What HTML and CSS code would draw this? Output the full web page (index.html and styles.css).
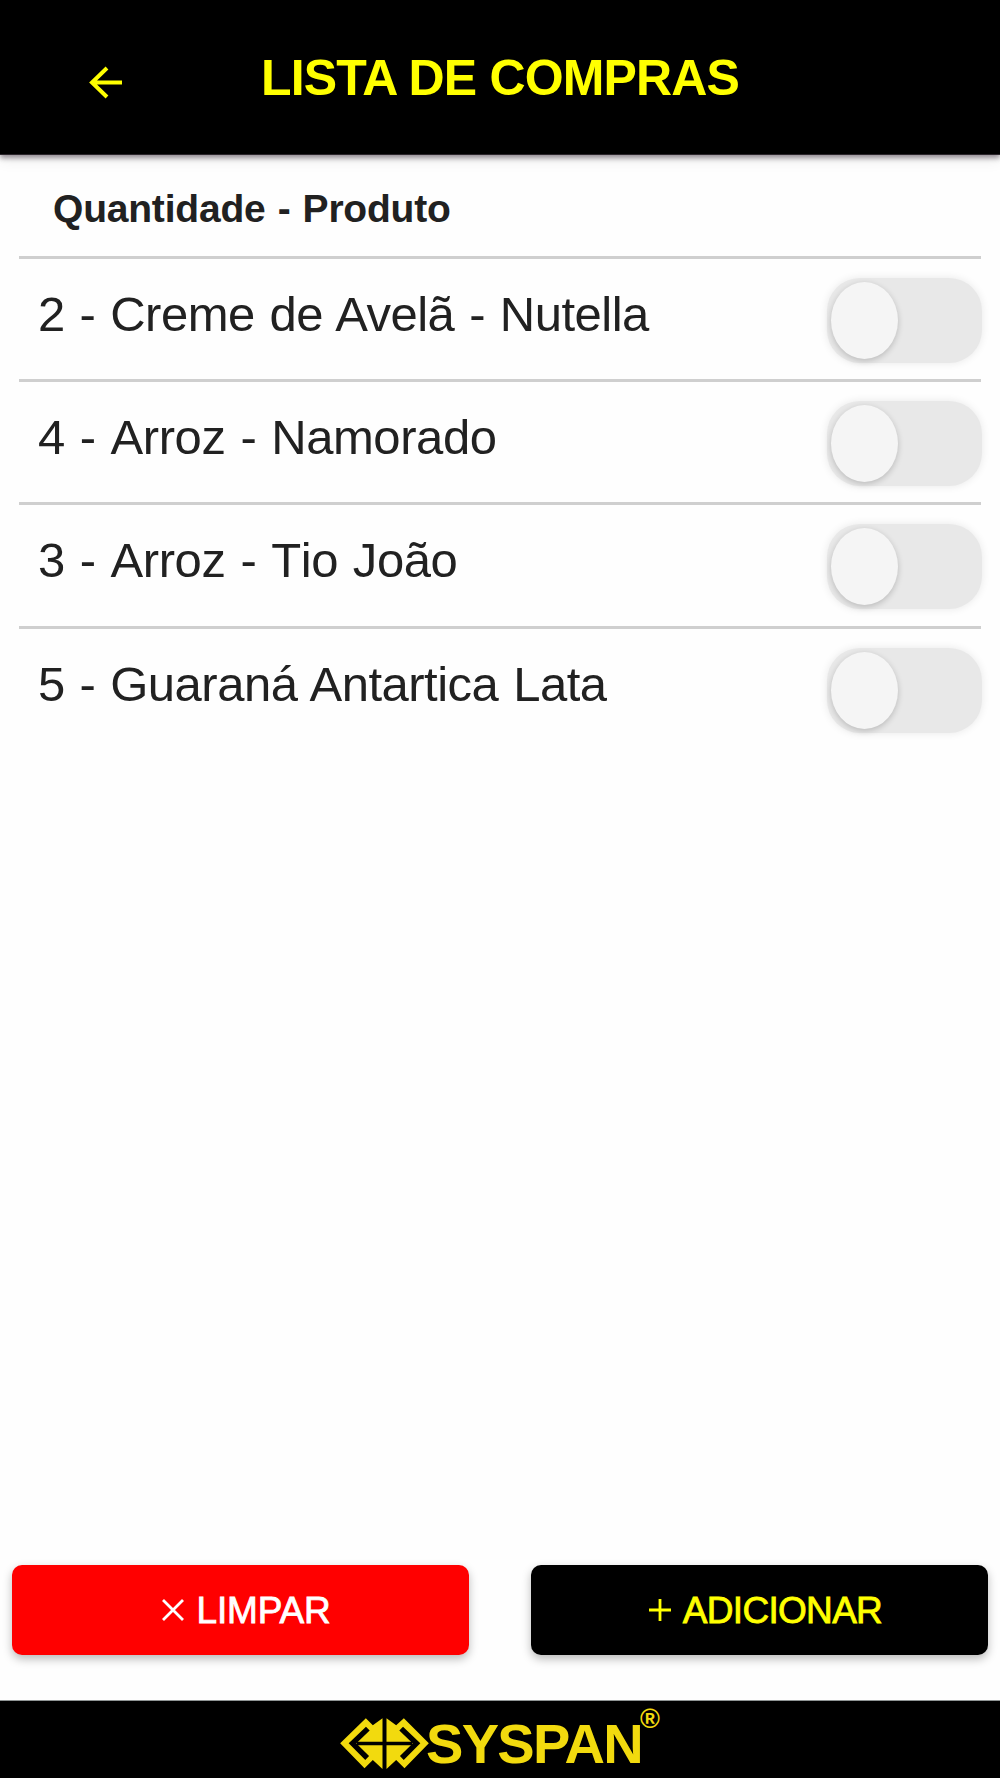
FILE: index.html
```html
<!DOCTYPE html>
<html lang="pt-BR">
<head>
<meta charset="utf-8">
<title>Lista de Compras</title>
<link rel="stylesheet" href="styles.css">
</head>
<body>
<div class="app">
  <header class="toolbar">
    <svg class="back" viewBox="0 0 34 34" aria-label="Voltar"><path d="M18 2 3 16.5 18 31M3 16.5H33" fill="none" stroke="currentColor" stroke-width="4"/></svg>
    <h1 class="title">LISTA DE COMPRAS</h1>
  </header>
  <main class="content">
    <h2 class="list-head">Quantidade - Produto</h2>
    <ul class="list">
      <li class="item"><span class="name name-long">2 - Creme de Avelã - Nutella</span><span class="toggle"><span class="knob"></span></span></li>
      <li class="item"><span class="name">4 - Arroz - Namorado</span><span class="toggle"><span class="knob"></span></span></li>
      <li class="item"><span class="name">3 - Arroz - Tio João</span><span class="toggle"><span class="knob"></span></span></li>
      <li class="item"><span class="name name-long">5 - Guaraná Antartica Lata</span><span class="toggle"><span class="knob"></span></span></li>
    </ul>
  </main>
  <div class="actions">
    <button class="btn btn-clear"><svg class="icon" viewBox="0 0 22 22"><path d="M1 1 21 21M21 1 1 21" stroke="currentColor" stroke-width="2.8"/></svg><span class="label">LIMPAR</span></button>
    <button class="btn btn-add"><svg class="icon" viewBox="0 0 22 22"><path d="M11 0V22M0 11H22" stroke="currentColor" stroke-width="2.8"/></svg><span class="label">ADICIONAR</span></button>
  </div>
  <footer class="footer">
    <svg class="mark" viewBox="60 84 266 153">
      <path fill="#f2da0e" d="M60 160 137 85 158 106 187 85V237L158 210 133 235ZM326 160 251 85 228 106 199 85V237L228 210 253 235Z"/>
      <path fill="none" stroke="#000" stroke-width="16" d="M143 116 97 160 141 204M243 116 289 160 245 204"/>
      <path stroke="#000" stroke-width="11" d="M110 160.500H276"/>
    </svg>
    <span class="brand">SYSPAN</span>
    <span class="reg">®</span>
  </footer>
</div>
</body>
</html>
```

FILE: styles.css
```css
* { box-sizing: border-box; }
body {
  margin: 0;
  background: #fefefe;
  color: #212121;
  font-family: "Liberation Sans", Arial, sans-serif;
}
.app { height: 1778px; display: flex; flex-direction: column; overflow: hidden; }
.toolbar {
  height: 155px;
  flex: none;
  display: grid;
  grid-template-columns: 180px 1fr 180px;
  background: #000;
  color: #ff0;
  border-bottom: 1px solid #2b252b;
  box-shadow: 0 3px 5px rgba(20, 0, 20, .42), 0 5px 14px rgba(0, 0, 0, .08);
}
.back { width: 34px; height: 34px; margin: 66px 0 0 89px; }
.title {
  margin: 49px 0 0;
  font-size: 50px;
  line-height: 58px;
  letter-spacing: -.85px;
  text-align: center;
  white-space: nowrap;
}
.content { flex: 1; padding: 0 19px; }
.list-head { margin: 0; padding: 31px 34px 0; height: 101px; font-size: 39px; line-height: 46px; letter-spacing: -.2px; word-spacing: 1.5px; }
.list { margin: 0; padding: 0; list-style: none; }
.item {
  height: 123.2px;
  border-top: 3px solid #cfcfcf;
  display: flex;
  justify-content: space-between;
  padding: 0 0 0 19px;
}
.name {
  margin-top: 27px;
  font-size: 49px;
  line-height: 56px;
  letter-spacing: -.42px;
  word-spacing: 1.7px;
  font-kerning: none;
  white-space: nowrap;
}
.name-long { font-kerning: normal; letter-spacing: -.5px; }
.toggle {
  width: 155px;
  height: 85px;
  margin: 19px -1px 0 0;
  padding: 4px;
  border-radius: 33px;
  background: #e8e8e8;
  box-shadow: 0 0 9px rgba(0, 0, 0, .09);
}
.knob {
  display: block;
  width: 67px;
  height: 77px;
  border-radius: 50%;
  background: #f5f5f5;
  box-shadow: 0 2px 6px rgba(0, 0, 0, .2);
}
.actions { flex: none; height: 135px; padding: 0 12px; display: flex; justify-content: space-between; align-items: flex-start; }
.btn {
  width: 457px;
  height: 90px;
  border: 0;
  border-radius: 10px;
  display: flex;
  align-items: center;
  justify-content: center;
  font-family: inherit;
  font-size: 37px;
  line-height: 44px;
  letter-spacing: -.7px;
  box-shadow: 0 4px 10px rgba(0, 0, 0, .27);
}
.btn-clear { background: #f00; color: #fff; gap: 13px; padding: 0 0 0 11px; letter-spacing: -.2px; }
.btn-add { background: #000; color: #ff0; gap: 12px; padding: 0 0 0 12px; }
.icon { width: 22px; height: 22px; }
.label { padding-top: 2px; -webkit-text-stroke: .8px currentColor; }
.footer {
  flex: none;
  height: 78px;
  background: #000;
  color: #f2da0e;
  display: flex;
  padding-left: 340px;
  border-top: 1px solid #8f9494;
}
.mark { width: 89px; height: 51px; margin-top: 17px; }
.brand { font-size: 56px; font-weight: 700; line-height: 60px; margin: 13px 0 0 -3px; letter-spacing: -1.7px; }
.reg { font-size: 27px; font-weight: 700; line-height: 30px; margin: 3px 0 0 -2px; }
```
